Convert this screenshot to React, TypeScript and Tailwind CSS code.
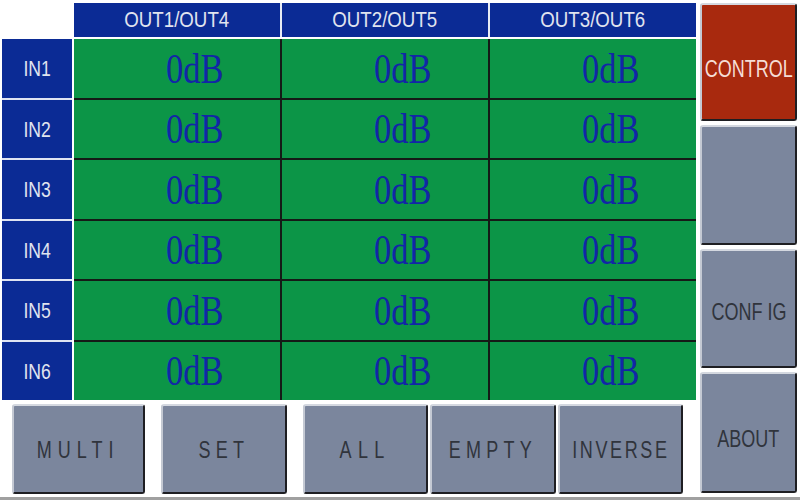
import React from "react";

const sans = { fontFamily: "'Liberation Sans', Arial, sans-serif" };
const serif = { fontFamily: "'Liberation Serif', 'Times New Roman', serif" };

function GreyBtn({
  label,
  w,
  tracking,
}: {
  label: string;
  w: string;
  tracking: string;
}) {
  return (
    <div
      className={`${w} h-full flex items-center justify-center pt-[2px] bg-[#7b869d] rounded-[3px] border-2 border-t-[#d4d8e0] border-l-[#c4c9d3] border-r-[#1e1e22] border-b-[#1e1e22]`}
    >
      <span
        className={`inline-block whitespace-nowrap text-[24px] leading-none text-[#30343c] scale-x-75 ${tracking}`}
        style={sans}
      >
        {label}
      </span>
    </div>
  );
}

function SideBtn({
  label,
  red,
  cls,
}: {
  label?: string;
  red?: boolean;
  cls: string;
}) {
  return (
    <div
      className={`${cls} shrink-0 min-w-0 flex items-center justify-center rounded-[3px] border-2 border-t-[#d4d8e0] border-l-[#c4c9d3] border-r-[#1e1e22] border-b-[#1e1e22] ${
        red ? "bg-[#a8290e]" : "bg-[#7b869d]"
      }`}
    >
      {label && (
        <span
          className={`inline-block shrink-0 whitespace-pre text-[24px] leading-none scale-x-75 ${
            red ? "text-[#f5ddd5]" : "text-[#30343c]"
          }`}
          style={sans}
        >
          {label}
        </span>
      )}
    </div>
  );
}

export default function App() {
  const outs = ["OUT1/OUT4", "OUT2/OUT5", "OUT3/OUT6"];
  const ins = ["IN1", "IN2", "IN3", "IN4", "IN5", "IN6"];
  return (
    <div className="w-[800px] h-[500px] bg-white flex border-b-[3px] border-[#a0a0a0] overflow-hidden">
      {/* left part */}
      <div className="w-[696px] shrink-0 flex flex-col">
        {/* header */}
        <div className="flex pt-[3px]">
          <div className="w-[74px]" />
          <div className="w-[622px] h-[34px] grid grid-cols-3 gap-[2px] bg-[#e8ecf4]">
            {outs.map((o) => (
              <div key={o} className="bg-[#0b2b95] flex items-center justify-center">
                <span
                  className="inline-block whitespace-nowrap text-[22px] leading-none text-[#e0e4ef] scale-x-85"
                  style={sans}
                >
                  {o}
                </span>
              </div>
            ))}
          </div>
        </div>
        {/* body */}
        <div className="flex pl-[2px] mt-[2px]">
          <div className="w-[70px] h-[361px] grid grid-rows-6 gap-[2px] bg-[#dfe4f2]">
            {ins.map((i) => (
              <div key={i} className="bg-[#0b2b95] flex items-center justify-center pt-[2px]">
                <span
                  className="inline-block text-[22px] leading-none text-[#e0e4ef] scale-x-80"
                  style={sans}
                >
                  {i}
                </span>
              </div>
            ))}
          </div>
          <div className="ml-[2px] w-[622px] h-[361px] grid grid-cols-3 grid-rows-6 gap-[2px] bg-[#141a16]">
            {Array.from({ length: 18 }).map((_, k) => (
              <div key={k} className="bg-[#0c9547] flex items-center pl-[92px]">
                <span
                  className="inline-block origin-left text-[43px] leading-none text-[#1226a6] scale-x-80"
                  style={serif}
                >
                  0dB
                </span>
              </div>
            ))}
          </div>
        </div>
        {/* bottom buttons */}
        <div className="flex mt-[4px] h-[90px] pl-[12px]">
          <GreyBtn label="MULTI" w="w-[133px]" tracking="tracking-[8px]" />
          <div className="w-[16px]" />
          <GreyBtn label="SET" w="w-[126px]" tracking="tracking-[7px]" />
          <div className="w-[16px]" />
          <div className="flex gap-[2px]">
            <GreyBtn label="ALL" w="w-[125px]" tracking="tracking-[8.5px]" />
            <GreyBtn label="EMPTY" w="w-[126px]" tracking="tracking-[7px]" />
            <GreyBtn label="INVERSE" w="w-[125px]" tracking="tracking-[3.5px]" />
          </div>
        </div>
      </div>
      {/* right column */}
      <div className="ml-[4px] w-[97px] shrink-0 pt-[3px] flex flex-col gap-[4px]">
        <SideBtn label="CONTROL" red cls="h-[118px] pt-[14px]" />
        <SideBtn cls="h-[120px]" />
        <SideBtn label="CONF IG" cls="h-[119px] pt-[6px]" />
        <SideBtn label="ABOUT" cls="h-[121px] pt-[12px]" />
      </div>
    </div>
  );
}
